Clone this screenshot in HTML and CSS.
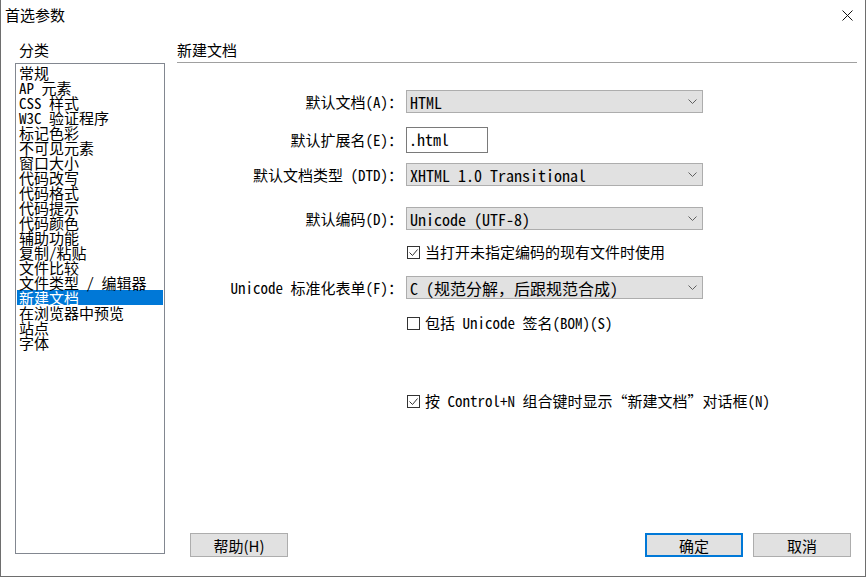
FILE: index.html
```html
<!DOCTYPE html>
<html lang="zh-CN">
<head>
  <meta charset="UTF-8" />
  <title>首选参数</title>
  <link rel="stylesheet" href="styles.css">
</head>
<body>

  <div class="window">
    <div class="titlebar">
      <span class="title">首选参数</span>
      <span class="close">
        <svg width="11" height="11" viewBox="0 0 11 11"><path d="M0.5 0.5 L10.5 10.5 M10.5 0.5 L0.5 10.5" stroke="#111" stroke-width="1" fill="none"/></svg>
      </span>
    </div>

    <div class="content">
      <div class="sidebar">
        <div class="section-label">分类</div>
        <ul class="category-list">
          <li>常规</li>
          <li>AP 元素</li>
          <li>CSS 样式</li>
          <li>W3C 验证程序</li>
          <li>标记色彩</li>
          <li>不可见元素</li>
          <li>窗口大小</li>
          <li>代码改写</li>
          <li>代码格式</li>
          <li>代码提示</li>
          <li>代码颜色</li>
          <li>辅助功能</li>
          <li>复制/粘贴</li>
          <li>文件比较</li>
          <li>文件类型 / 编辑器</li>
          <li class="selected">新建文档</li>
          <li>在浏览器中预览</li>
          <li>站点</li>
          <li>字体</li>
        </ul>
      </div>

      <div class="panel">
        <div class="panel-title">新建文档</div>

        <div class="form">
          <div class="row row-1">
            <label class="field-label">默认文档(A)：</label>
            <div class="select">
              <span>HTML</span>
              <svg class="chevron" width="9" height="5" viewBox="0 0 9 5"><path d="M0.5 0.5 L4.5 4.5 L8.5 0.5" stroke="#606060" fill="none"/></svg>
            </div>
          </div>

          <div class="row row-2">
            <label class="field-label">默认扩展名(E)：</label>
            <div class="text-input">.html</div>
          </div>

          <div class="row row-3">
            <label class="field-label">默认文档类型 (DTD)：</label>
            <div class="select">
              <span>XHTML 1.0 Transitional</span>
              <svg class="chevron" width="9" height="5" viewBox="0 0 9 5"><path d="M0.5 0.5 L4.5 4.5 L8.5 0.5" stroke="#606060" fill="none"/></svg>
            </div>
          </div>

          <div class="row row-4">
            <label class="field-label">默认编码(D)：</label>
            <div class="select">
              <span>Unicode (UTF-8)</span>
              <svg class="chevron" width="9" height="5" viewBox="0 0 9 5"><path d="M0.5 0.5 L4.5 4.5 L8.5 0.5" stroke="#606060" fill="none"/></svg>
            </div>
          </div>

          <div class="row row-5">
            <span></span>
            <div class="check">
              <span class="box"><svg width="11" height="11" viewBox="0 0 11 11"><path d="M1.5 5.5 L4.5 8.5 L9.5 2.5" stroke="#333" fill="none"/></svg></span>
              <span>当打开未指定编码的现有文件时使用</span>
            </div>
          </div>

          <div class="row row-6">
            <label class="field-label">Unicode 标准化表单(F)：</label>
            <div class="select">
              <span>C (规范分解，后跟规范合成)</span>
              <svg class="chevron" width="9" height="5" viewBox="0 0 9 5"><path d="M0.5 0.5 L4.5 4.5 L8.5 0.5" stroke="#606060" fill="none"/></svg>
            </div>
          </div>

          <div class="row row-7">
            <span></span>
            <div class="check">
              <span class="box"></span>
              <span>包括 Unicode 签名(BOM)(S)</span>
            </div>
          </div>

          <div class="row row-8">
            <span></span>
            <div class="check">
              <span class="box"><svg width="11" height="11" viewBox="0 0 11 11"><path d="M1.5 5.5 L4.5 8.5 L9.5 2.5" stroke="#333" fill="none"/></svg></span>
              <span>按 Control+N 组合键时显示“新建文档”对话框(N)</span>
            </div>
          </div>
        </div>

        <div class="buttons">
          <button type="button" class="btn">帮助(H)</button>
          <span class="spacer"></span>
          <button type="button" class="btn btn-default">确定</button>
          <button type="button" class="btn">取消</button>
        </div>
      </div>
    </div>
  </div>

</body>
</html>
```

FILE: styles.css
```css
* { box-sizing: border-box; }

body {
  margin: 0;
  background: #fff;
  color: #000;
  font-family: "Noto Sans CJK SC", sans-serif;
}

.window {
  width: 866px;
  height: 577px;
  border: 1px solid #6e6e6e;
  border-top: none;
  background: #fff;
  display: flex;
  flex-direction: column;
}

.titlebar {
  height: 30px;
  display: flex;
  align-items: center;
  padding: 0 12px 0 4px;
}

.title {
  font-size: 15px;
  line-height: 20px;
}

.close {
  margin-left: auto;
  display: flex;
}

.content {
  flex: 1;
  display: flex;
  padding: 0 8px 0 14px;
}

/* left column */
.sidebar {
  width: 150px;
  display: flex;
  flex-direction: column;
}

.section-label {
  margin-top: 10px;
  margin-bottom: 3px;
  padding-left: 4px;
  font-size: 15px;
  line-height: 20px;
}

.category-list {
  margin: 0;
  padding: 1px 1px;
  list-style: none;
  height: 491px;
  border: 1px solid #828790;
  font-family: "Noto Sans Mono CJK SC", "Noto Sans CJK SC", monospace;
  font-size: 15px;
}

.category-list li {
  height: 15px;
  line-height: 15px;
  padding-left: 2px;
  white-space: pre;
}

.category-list li.selected {
  background: #0078d7;
  color: #fff;
}

/* right panel */
.panel {
  flex: 1;
  margin-left: 12px;
  display: flex;
  flex-direction: column;
}

.panel-title {
  margin-top: 10px;
  padding-bottom: 2px;
  font-size: 15px;
  line-height: 20px;
  border-bottom: 1px solid #a0a0a0;
}

.form {
  display: flex;
  flex-direction: column;
}

.row {
  display: grid;
  grid-template-columns: 226px 297px;
  column-gap: 3px;
  align-items: center;
}

.row-1 { margin-top: 27px; }
.row-2 { margin-top: 14px; }
.row-3 { margin-top: 10px; }
.row-4 { margin-top: 21px; }
.row-5 { margin-top: 14px; }
.row-6 { margin-top: 16px; }
.row-7 { margin-top: 16px; }
.row-8 { margin-top: 62px; }

.field-label {
  text-align: right;
  font-family: "Noto Sans Mono CJK SC", "Noto Sans CJK SC", monospace;
  font-size: 15px;
  line-height: 20px;
  white-space: pre;
}

.select {
  height: 23px;
  display: flex;
  align-items: center;
  padding: 0 5px 0 3px;
  background: #e1e1e1;
  border: 1px solid #adadad;
  font-family: "Noto Sans Mono CJK SC", "Noto Sans CJK SC", monospace;
  font-size: 16px;
  white-space: pre;
}

.chevron {
  margin-left: auto;
}

.text-input {
  width: 82px;
  height: 26px;
  padding: 0 2px;
  border: 1px solid #7a7a7a;
  background: #fff;
  font-family: "Noto Sans Mono CJK SC", "Noto Sans CJK SC", monospace;
  font-size: 16px;
  line-height: 23px;
}

.check {
  height: 16px;
  display: flex;
  align-items: center;
  gap: 5px;
  font-family: "Noto Sans Mono CJK SC", "Noto Sans CJK SC", monospace;
  font-size: 15px;
  line-height: 16px;
  white-space: pre;
}

.box {
  width: 13px;
  height: 13px;
  margin-left: 1px;
  border: 1px solid #333;
  background: #fff;
  display: flex;
}

/* buttons */
.buttons {
  margin-top: auto;
  margin-bottom: 19px;
  padding: 0 6px 0 13px;
  display: flex;
  gap: 10px;
}

.spacer {
  flex: 1;
}

.btn {
  width: 98px;
  height: 24px;
  padding: 0;
  background: #e1e1e1;
  border: 1px solid #adadad;
  font-family: "Noto Sans CJK SC", sans-serif;
  font-size: 15px;
  color: #000;
}

.btn-default {
  border: 2px solid #0078d7;
}
```
